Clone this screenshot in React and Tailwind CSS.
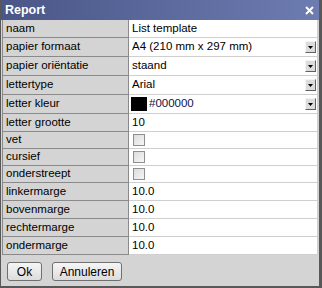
import React from 'react';

const rows = [
  { label: 'naam', type: 'text', value: 'List template', h: 'h-[18px]' },
  { label: 'papier formaat', type: 'select', value: 'A4 (210 mm x 297 mm)', h: 'h-[19px]' },
  { label: 'papier oriëntatie', type: 'select', value: 'staand', h: 'h-[19px]' },
  { label: 'lettertype', type: 'select', value: 'Arial', h: 'h-[19px]' },
  { label: 'letter kleur', type: 'color', value: '#000000', h: 'h-[19px]' },
  { label: 'letter grootte', type: 'text', value: '10', h: 'h-[18px]' },
  { label: 'vet', type: 'check', h: 'h-[17px]' },
  { label: 'cursief', type: 'check', h: 'h-[17px]' },
  { label: 'onderstreept', type: 'check', h: 'h-[17px]' },
  { label: 'linkermarge', type: 'text', value: '10.0', h: 'h-[18px]' },
  { label: 'bovenmarge', type: 'text', value: '10.0', h: 'h-[18px]' },
  { label: 'rechtermarge', type: 'text', value: '10.0', h: 'h-[18px]' },
  { label: 'ondermarge', type: 'text', value: '10.0', h: 'h-[18px]' },
];

const DropButton = () => (
  <div className="w-[11px] h-[12px] mr-[1px] bg-[#dcdcdc] border-t border-l border-t-[#f4f4f4] border-l-[#f4f4f4] border-r border-b border-r-[#606060] border-b-[#606060] flex items-center justify-center">
    <svg width="5" height="3" viewBox="0 0 5 3">
      <path d="M0 0H5L2.5 3Z" fill="#000" />
    </svg>
  </div>
);

const Checkbox = () => (
  <div className="w-[12px] h-[12px] ml-[4px] border border-[#8e8f8f] bg-gradient-to-br from-[#dcdcdc] to-[#f6f6f6]" />
);

const Row = ({ row }) => (
  <div className={`flex ${row.h}`}>
    <div className="w-[126px] shrink-0 bg-[#d4d4d4] border-r border-b border-[#8a8a8a] flex items-center pl-[3px] text-black">
      {row.label}
    </div>
    <div className="flex-1 bg-white border-b border-[#cfcfcf] flex items-center">
      {row.type === 'text' && <span className="pl-[3px]">{row.value}</span>}
      {row.type === 'select' && (
        <>
          <span className="pl-[3px] flex-1">{row.value}</span>
          <DropButton />
        </>
      )}
      {row.type === 'color' && (
        <>
          <div className="w-[16px] h-[14px] ml-[2px] bg-black" />
          <span className="pl-[2px] flex-1 text-[#10104a]">{row.value}</span>
          <DropButton />
        </>
      )}
      {row.type === 'check' && <Checkbox />}
    </div>
  </div>
);

export default function App() {
  return (
    <div className="w-[322px] h-[288px] bg-[#585858] text-[11.5px] leading-none" style={{ fontFamily: '"Liberation Sans", Arial, sans-serif' }}>
      <div className="ml-[1px] w-[318px] h-[286px] bg-[#d4d4d4] flex flex-col">
        {/* Title bar */}
        <div className="h-[20px] bg-gradient-to-r from-[#4a5687] to-[#6d7cb1] flex items-center justify-between pl-[4px] pr-[4px]">
          <span className="text-white font-bold text-[12.5px]">Report</span>
          <svg width="9" height="9" viewBox="0 0 9 9" className="mr-[1px]">
            <path d="M1 1L8 8M8 1L1 8" stroke="#fff" strokeWidth="2" />
          </svg>
        </div>

        {/* Property grid */}
        <div className="ml-[1px] mr-[1px] border-l border-[#8a8a8a] border-r border-r-[#cfcfcf]">
          {rows.map((row) => (
            <Row key={row.label} row={row} />
          ))}
        </div>

        {/* Buttons */}
        <div className="flex gap-[10px] pl-[6px] pt-[7px]">
          <button className="w-[35px] h-[19px] rounded-[3px] border border-[#707070] bg-gradient-to-b from-[#f6f6f6] to-[#dcdcdc] text-[12px] text-black">
            Ok
          </button>
          <button className="w-[70px] h-[19px] rounded-[3px] border border-[#707070] bg-gradient-to-b from-[#f6f6f6] to-[#dcdcdc] text-[12px] text-black">
            Annuleren
          </button>
        </div>
      </div>
    </div>
  );
}
